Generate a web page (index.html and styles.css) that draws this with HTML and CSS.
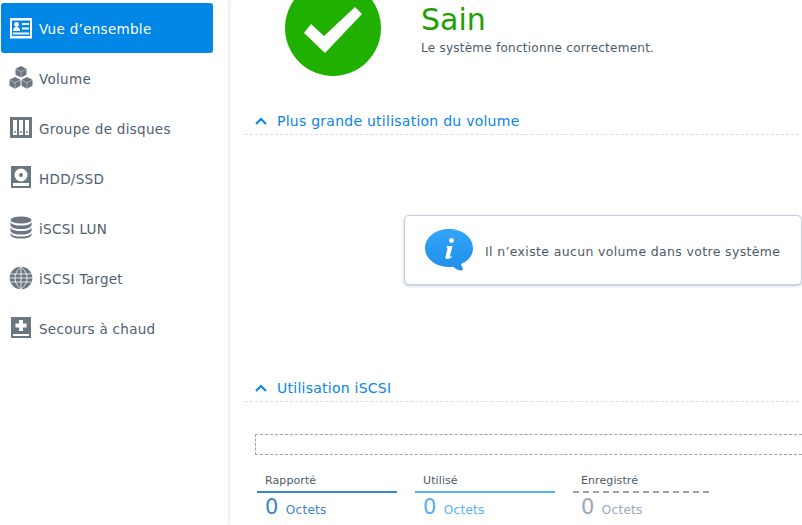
FILE: index.html
```html
<!DOCTYPE html>
<html lang="fr">
<head>
  <meta charset="UTF-8">
  <title>Gestionnaire de stockage</title>
  <link rel="stylesheet" href="styles.css">
</head>
<body>
  <div class="page">
    <nav class="sidebar">
      <a class="navItem active">
        <svg class="navIcon" viewBox="0 0 24 24"><path fill="#fff" fill-rule="evenodd" d="M1 2h22v20.500H1zM3 4.500V20h18V4.500z"/><circle cx="7.500" cy="8.500" r="2.400" fill="#fff"/><path fill="#fff" d="M4 15c0-3 1.500-4 3.500-4s3.500 1 3.500 4z"/><path fill="#fff" d="M13 7h7v2h-7zM13 11.500h7v2h-7zM4 16.500h16v2H4z"/></svg>
        <span>Vue d’ensemble</span>
      </a>
      <a class="navItem">
        <svg class="navIcon" viewBox="0 0 24 24"><path fill="#6c7680" d="M12 0l5.500 2.800v6L12 11.600 6.500 8.800v-6z"/><path fill="#6c7680" d="M6 11l5.500 2.800v6L6 22.800.5 19.800v-6z"/><path fill="#6c7680" d="M18 11l5.500 2.800v6L18 22.800l-5.500-3v-6z"/><path stroke="#fff" stroke-width=".4" fill="none" d="M6.500 2.800l5.500 3 5.500-3M12 5.800v5.800M.5 13.800l5.500 3 5.500-3M6 16.800v6M12.500 13.800l5.500 3 5.500-3M18 16.800v6"/></svg>
        <span>Volume</span>
      </a>
      <a class="navItem">
        <svg class="navIcon" viewBox="0 0 24 24"><path fill="#6c7680" d="M1 1h22v21H1z"/><path fill="#fff" d="M4 4h4v15H4zM10 4h4v15h-4zM16 4h4v15h-4z"/><path fill="#6c7680" d="M5.300 15h1.400v2H5.300zM11.300 15h1.400v2h-1.400zM17.300 15h1.400v2h-1.400z"/></svg>
        <span>Groupe de disques</span>
      </a>
      <a class="navItem">
        <svg class="navIcon" viewBox="0 0 24 24"><path fill="#6c7680" d="M2 0h20v22H2z"/><circle cx="12" cy="9" r="6.500" fill="#fff"/><circle cx="12" cy="9" r="2" fill="#6c7680"/><path fill="#fff" d="M4 17h16v3H4z"/></svg>
        <span>HDD/SSD</span>
      </a>
      <a class="navItem">
        <svg class="navIcon" viewBox="0 0 24 24"><ellipse cx="12" cy="4" rx="10.500" ry="3.600" fill="#6c7680"/><path fill="#6c7680" d="M1.500 6c1 2.500 5 3.600 10.500 3.600S21.500 8.500 22.500 6v3.500c-1 2.500-5 3.600-10.500 3.600S2.500 12 1.500 9.500zM1.500 11.500c1 2.500 5 3.600 10.500 3.600s9.500-1.100 10.500-3.600V15c-1 2.500-5 3.600-10.500 3.600S2.500 17.500 1.500 15zM1.500 17c1 2.500 5 3.600 10.500 3.600S21.500 19.500 22.500 17v2c-1 2.500-5 3.600-10.500 3.600S2.500 21.500 1.500 19z"/></svg>
        <span>iSCSI LUN</span>
      </a>
      <a class="navItem">
        <svg class="navIcon" viewBox="0 0 24 24"><circle cx="12" cy="12" r="11.300" fill="#6c7680"/><path fill="none" stroke="#fff" stroke-width=".8" d="M12 1v22M2 8h20M2 16h20M1 12h22M12 1c-8 6-8 16 0 22M12 1c8 6 8 16 0 22"/></svg>
        <span>iSCSI Target</span>
      </a>
      <a class="navItem">
        <svg class="navIcon" viewBox="0 0 24 24"><path fill="#6c7680" d="M2 1h20v21H2z"/><path fill="#fff" d="M10 4h4v3.500h3.500v4H14V15h-4v-3.500H6.500v-4H10zM4 18h16v2H4z"/></svg>
        <span>Secours à chaud</span>
      </a>
    </nav>

    <main class="content">
      <div class="status">
        <div class="statusCircle">
          <svg viewBox="0 0 96 96" class="checkMark"><path fill="#fff" d="M19 53l7-9 13 12 31-29 7 7-37 39z"/></svg>
        </div>
        <div class="statusText">
          <h1>Sain</h1>
          <p>Le système fonctionne correctement.</p>
        </div>
      </div>

      <h2 class="sectionTitle">
        <svg class="chevron" viewBox="0 0 12 8"><path fill="none" stroke="#0a84e8" stroke-width="2" d="M1 7l5-5 5 5"/></svg>
        Plus grande utilisation du volume
      </h2>
      <div class="emptyArea">
        <div class="infoCard">
          <svg class="infoIcon" viewBox="0 0 48 43">
            <defs><linearGradient id="bubble" x1="0" y1="0" x2="0" y2="1"><stop offset="0" stop-color="#33a5fb"/><stop offset="1" stop-color="#1f8fe8"/></linearGradient></defs>
            <path fill="url(#bubble)" d="M24 0c13 0 24 8 24 19 0 8-5 13-12 16l2 5.500-1 1c-4 0-7-2-9-4-1 .5-3 .5-4 .5C11 38 0 30 0 19S11 0 24 0z"/>
            <circle cx="26.500" cy="11.500" r="2.400" fill="#fff"/>
            <path fill="#fff" d="M22 17h5.500l-2.500 10c0 1 1 1 2 0v1c-2 2-7 3-6.500 0l2-8.500-1-1z"/>
          </svg>
          <span>Il n’existe aucun volume dans votre système</span>
        </div>
      </div>

      <h2 class="sectionTitle">
        <svg class="chevron" viewBox="0 0 12 8"><path fill="none" stroke="#0a84e8" stroke-width="2" d="M1 7l5-5 5 5"/></svg>
        Utilisation iSCSI
      </h2>
      <div class="usageBar"></div>
      <div class="legend">
        <div class="legendItem reported">
          <div class="legendLabel">Rapporté</div>
          <div class="legendValue"><b>0</b> Octets</div>
        </div>
        <div class="legendItem used">
          <div class="legendLabel">Utilisé</div>
          <div class="legendValue"><b>0</b> Octets</div>
        </div>
        <div class="legendItem saved">
          <div class="legendLabel">Enregistré</div>
          <div class="legendValue"><b>0</b> Octets</div>
        </div>
      </div>
    </main>
  </div>
</body>
</html>
```

FILE: styles.css
```css
html, body {
  margin: 0;
  height: 100%;
  overflow: hidden;
  background: #fff;
}
body {
  font-family: "DejaVu Sans", sans-serif;
  color: #4e5a66;
}
.page {
  display: flex;
  height: 525px;
}

.sidebar {
  width: 229px;
  flex: none;
  box-sizing: border-box;
  padding: 3px 15px 0 1px;
  border-right: 1px solid #e8ebee;
  box-shadow: 1px 0 3px rgba(0, 0, 0, 0.06);
}
.navItem {
  display: flex;
  align-items: center;
  gap: 6px;
  height: 50px;
  padding-left: 8px;
  border-radius: 3px;
  font-size: 13.500px;
  letter-spacing: 0.3px;
  color: #506070;
}
.navItem span {
  padding-top: 1px;
}
.navItem.active {
  background: #0086e5;
  color: #fff;
}
.navIcon {
  width: 24px;
  height: 24px;
  flex: none;
}

.content {
  flex: 1;
  min-width: 0;
  margin-top: -20px;
  padding-left: 16px;
}
.status {
  display: flex;
  height: 122px;
  padding-left: 40px;
}
.statusCircle {
  width: 96px;
  height: 96px;
  flex: none;
  border-radius: 50%;
  background: #20b000;
}
.checkMark {
  display: block;
  width: 96px;
  height: 96px;
}
.statusText {
  margin-left: 40px;
  padding-top: 22px;
}
.statusText h1 {
  margin: 0;
  font-size: 30px;
  line-height: 36px;
  font-weight: normal;
  color: #20a000;
}
.statusText p {
  margin: 2px 0 0;
  font-size: 12px;
  letter-spacing: 0.25px;
  line-height: 16px;
}

.sectionTitle {
  display: flex;
  align-items: center;
  gap: 10px;
  box-sizing: border-box;
  height: 33px;
  margin: 0 3px 0 0;
  padding: 6px 0 0 10px;
  font-size: 14px;
  letter-spacing: 0.25px;
  font-weight: normal;
  color: #0a84e8;
  border-bottom: 1px dashed #d4dfe9;
}
.chevron {
  width: 12px;
  height: 8px;
}
.emptyArea {
  display: flex;
  justify-content: flex-end;
  height: 234px;
  box-sizing: border-box;
  padding-top: 80px;
}
.infoCard {
  display: flex;
  align-items: center;
  gap: 12px;
  width: 398px;
  height: 70px;
  box-sizing: border-box;
  padding-left: 20px;
  background: #fff;
  border: 1px solid #c5d0dc;
  border-radius: 5px;
  box-shadow: 0 1px 3px rgba(120, 140, 160, 0.5);
  font-size: 12.500px;
  letter-spacing: 0.35px;
}
.infoCard span {
  padding-top: 2px;
}
.infoIcon {
  width: 48px;
  height: 43px;
  flex: none;
}

.usageBar {
  height: 19px;
  margin: 32px 0 0 10px;
  border: 1px dashed #9aa2aa;
  border-right: none;
}
.legend {
  display: flex;
  gap: 18px;
  margin: 17px 0 0 12px;
}
.legendItem {
  width: 140px;
}
.legendLabel {
  padding-left: 8px;
  height: 19px;
  font-size: 11px;
  letter-spacing: 0.1px;
  line-height: 18px;
  border-bottom: 2px solid;
}
.legendValue {
  padding: 1px 0 0 8px;
  font-size: 12px;
  letter-spacing: 0.3px;
  line-height: 26px;
}
.legendValue b {
  margin-right: 3px;
  font-size: 21px;
  font-weight: normal;
}
.reported .legendLabel { border-color: #3c84cc; }
.reported .legendValue { color: #3c84cc; }
.used .legendLabel { border-color: #56b0f2; }
.used .legendValue { color: #56b0f2; }
.saved { width: 138px; }
.saved .legendLabel {
  border-bottom: none;
  height: 21px;
  background: repeating-linear-gradient(90deg, #9aa2aa 0 6px, transparent 6px 10px) bottom / 100% 2px no-repeat;
}
.saved .legendValue { color: #9aa8b8; }
.legendItem .legendLabel { color: #4e5a66; }
```
